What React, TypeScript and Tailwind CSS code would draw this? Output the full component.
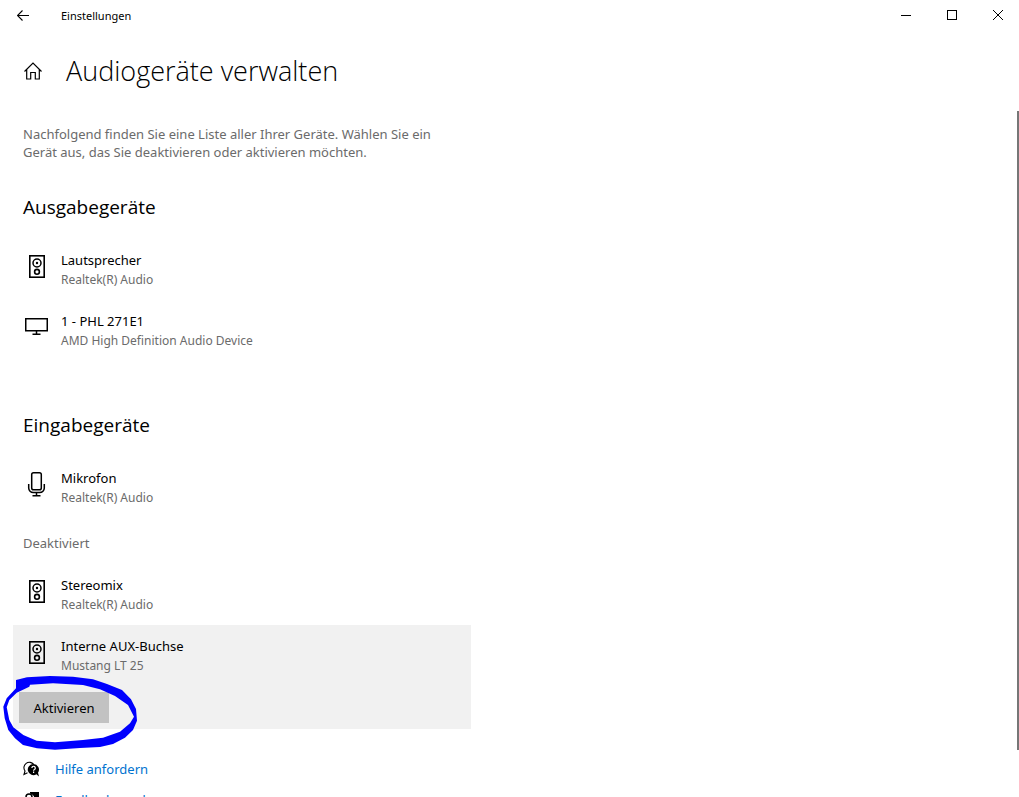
import React from 'react';

type Kind = 'speaker' | 'monitor' | 'mic';

function DeviceIcon({ kind }: { kind: Kind }) {
  return (
    <svg
      aria-hidden="true"
      className="mt-[5px] h-6 w-6 shrink-0 overflow-visible"
      viewBox="0 0 24 24"
      fill="none"
      stroke="#000"
      strokeWidth="1.5"
    >
      {kind === 'speaker' && (
        <>
          <rect x="4.8" y="0.8" width="14.4" height="21.4" strokeWidth="1.6" />
          <circle cx="12" cy="8" r="4" />
          <circle cx="12" cy="8" r="1.2" fill="#000" stroke="none" />
          <circle cx="12" cy="16.8" r="2.4" strokeWidth="1.6" />
        </>
      )}
      {kind === 'monitor' && (
        <>
          <rect x="0.75" y="2.75" width="21.5" height="12" strokeWidth="1.5" />
          <path d="M11.5 15v3M7.5 18.2h8" />
        </>
      )}
      {kind === 'mic' && (
        <>
          <rect x="6.7" y="-0.3" width="9.6" height="17" rx="1.8" />
          <path d="M3.7 11v4a4.6 4.6 0 0 0 4.6 4.6h6.4a4.6 4.6 0 0 0 4.6-4.6v-4M11.5 19.6v3M7.5 22.8h8" />
        </>
      )}
    </svg>
  );
}

function Device({ kind, name, detail }: { kind: Kind; name: string; detail: string }) {
  return (
    <button type="button" className="flex w-full gap-3 px-3 py-[11px] text-left">
      <DeviceIcon kind={kind} />
      <span className="flex flex-col">
        <span className="text-[13px] leading-[20px] text-black">{name}</span>
        <span className="text-[12px] leading-[19px] text-[#6b6b6b]">{detail}</span>
      </span>
    </button>
  );
}

export default function App() {
  return (
    <div className="flex h-screen flex-col overflow-hidden bg-white font-['Noto_Sans','Open_Sans',sans-serif] text-black">
      <header className="flex h-8 shrink-0 items-center">
        <button type="button" aria-label="Zurück" className="flex h-8 w-[46px] items-center justify-center">
          <svg aria-hidden="true" className="h-3 w-3" viewBox="0 0 12 12" fill="none" stroke="#000" strokeWidth="1.1">
            <path d="M0.5 5.5H12M5.5 0.5l-5 5 5 5" />
          </svg>
        </button>
        <span className="grow pl-[15px] text-[11px] leading-[16px]">Einstellungen</span>
        <div className="flex">
          <button type="button" aria-label="Minimieren" className="flex h-8 w-[46px] items-center justify-center">
            <svg aria-hidden="true" className="h-3 w-3 overflow-visible" viewBox="0 0 12 12" stroke="#000">
              <path d="M3 5.5h10" />
            </svg>
          </button>
          <button type="button" aria-label="Maximieren" className="flex h-8 w-[46px] items-center justify-center">
            <svg aria-hidden="true" className="h-3 w-3 overflow-visible" viewBox="0 0 12 12" fill="none" stroke="#000">
              <rect x="3.5" y="0.5" width="9" height="9" />
            </svg>
          </button>
          <button type="button" aria-label="Schließen" className="flex h-8 w-[46px] items-center justify-center">
            <svg aria-hidden="true" className="h-3 w-3 overflow-visible" viewBox="0 0 12 12" stroke="#000">
              <path d="M3 0l10 10M13 0L3 10" />
            </svg>
          </button>
        </div>
      </header>

      <div className="flex h-[78px] shrink-0 items-center gap-6 pl-6">
        <a href="#home" aria-label="Startseite">
          <svg aria-hidden="true" className="h-[18px] w-[18px]" viewBox="0 0 18 18" fill="none" stroke="#000" strokeWidth="1.2">
            <path d="M0.5 9.5L9 1l8.5 8.5M2.7 7.500v9.500h4v-6.500h4.600v6.500h4V7.500" />
          </svg>
        </a>
        <h1 className="font-['Open_Sans','Noto_Sans',sans-serif] text-[27px] leading-[36px] font-light">Audiogeräte verwalten</h1>
      </div>

      <div className="relative min-h-0 grow overflow-hidden">
        <div className="absolute top-px right-0 h-[93%] w-0.5 bg-[#767676]" />
        <main className="max-w-[471px] pl-[13px]">
          <p className="px-2.5 pt-[15px] text-[13px] leading-[18px] text-[#6b6b6b]">
            Nachfolgend finden Sie eine Liste aller Ihrer Geräte. Wählen Sie ein Gerät aus, das Sie deaktivieren oder
            aktivieren möchten.
          </p>

          <section>
            <h2 className="px-2.5 pt-8 pb-[18px] font-['Open_Sans','Noto_Sans',sans-serif] text-[19px] leading-[28px]">Ausgabegeräte</h2>
            <Device kind="speaker" name="Lautsprecher" detail="Realtek(R) Audio" />
            <Device kind="monitor" name="1 - PHL 271E1" detail="AMD High Definition Audio Device" />
          </section>

          <section className="pt-[50px]">
            <h2 className="px-2.5 pb-[18px] font-['Open_Sans','Noto_Sans',sans-serif] text-[19px] leading-[28px]">Eingabegeräte</h2>
            <Device kind="mic" name="Mikrofon" detail="Realtek(R) Audio" />
            <h3 className="px-2.5 pt-4 pb-3 text-[13px] leading-[18px] text-[#6b6b6b]">Deaktiviert</h3>
            <Device kind="speaker" name="Stereomix" detail="Realtek(R) Audio" />
            <div className="relative bg-[#f1f1f1] pb-1.5">
              <Device kind="speaker" name="Interne AUX-Buchse" detail="Mustang LT 25" />
              <button
                type="button"
                className="mt-1.5 ml-1.5 flex h-[31px] w-[90px] items-center justify-center bg-[#c2c2c2] text-[13px] leading-[20px]"
              >
                Aktivieren
              </button>
              <svg
                aria-hidden="true"
                className="pointer-events-none absolute top-[49px] -left-[13px] h-[76px] w-[140px]"
                viewBox="0 0 140 76"
              >
                <path
                  d="M16 6L27 3.3 50 2 73 2.7 93 5.3 107 10 122 16 131 25.3 136 35 137 46.7 133 56 125 63.7 113 70 100 73 80 74 55 75.7 37 74.3 23 71 15 64.3 8.3 56 4.7 44.3 3.3 32.7 6.7 24.3 16 14.3ZM29.3 12.700L16.700 18.700 9.300 26 6.700 33.300 9.300 46 13.300 53.300 23.300 61 36.700 66.700 55 68.300 83 66 103 63.700 120 57.700 130 49.300 134 42.700 128 31 115 22 100 15.300 83 11 53 9.300 30 10.700Z"
                  fill="#0000fe"
                  fillRule="evenodd"
                />
              </svg>
            </div>
          </section>

          <nav className="flex flex-col items-start gap-[11px] pt-[30px] pl-2.5 text-[13px] leading-[20px] text-[#0073cf]">
            <a href="#hilfe" className="flex items-center gap-4">
              <svg aria-hidden="true" className="h-4 w-4" viewBox="0 0 16 16">
                <path
                  d="M4.500 11.700L1 13.500l1-3.500A5.200 5.200 0 1 1 10.800 3.500"
                  fill="none"
                  stroke="#000"
                  strokeWidth="1.1"
                />
                <path d="M10.500 3a5.600 5.600 0 1 0 2.900 10.300L16 15.500l-1-3.800a5.600 5.600 0 0 0-4.500-8.700z" fill="#000" />
                <path d="M8.900 7a1.700 1.700 0 1 1 2.600 1.400c-.7.400-.9.700-.9 1.300M10.600 10.600v1.300" fill="none" stroke="#fff" strokeWidth="1.2" />
              </svg>
              Hilfe anfordern
            </a>
            <a href="#feedback" className="flex items-center gap-4">
              <svg aria-hidden="true" className="h-4 w-4" viewBox="0 0 16 16">
                <path d="M7 0h9v8h-3l-2 2V7.500A4 4 0 0 0 8.500 2.300L7 1.500z" fill="#000" />
                <circle cx="6" cy="5" r="3" fill="none" stroke="#000" strokeWidth="1.5" />
                <path d="M0 15.500a6 6 0 0 1 12 0" fill="none" stroke="#000" strokeWidth="1.5" />
              </svg>
              Feedback senden
            </a>
          </nav>
        </main>
      </div>
    </div>
  );
}
